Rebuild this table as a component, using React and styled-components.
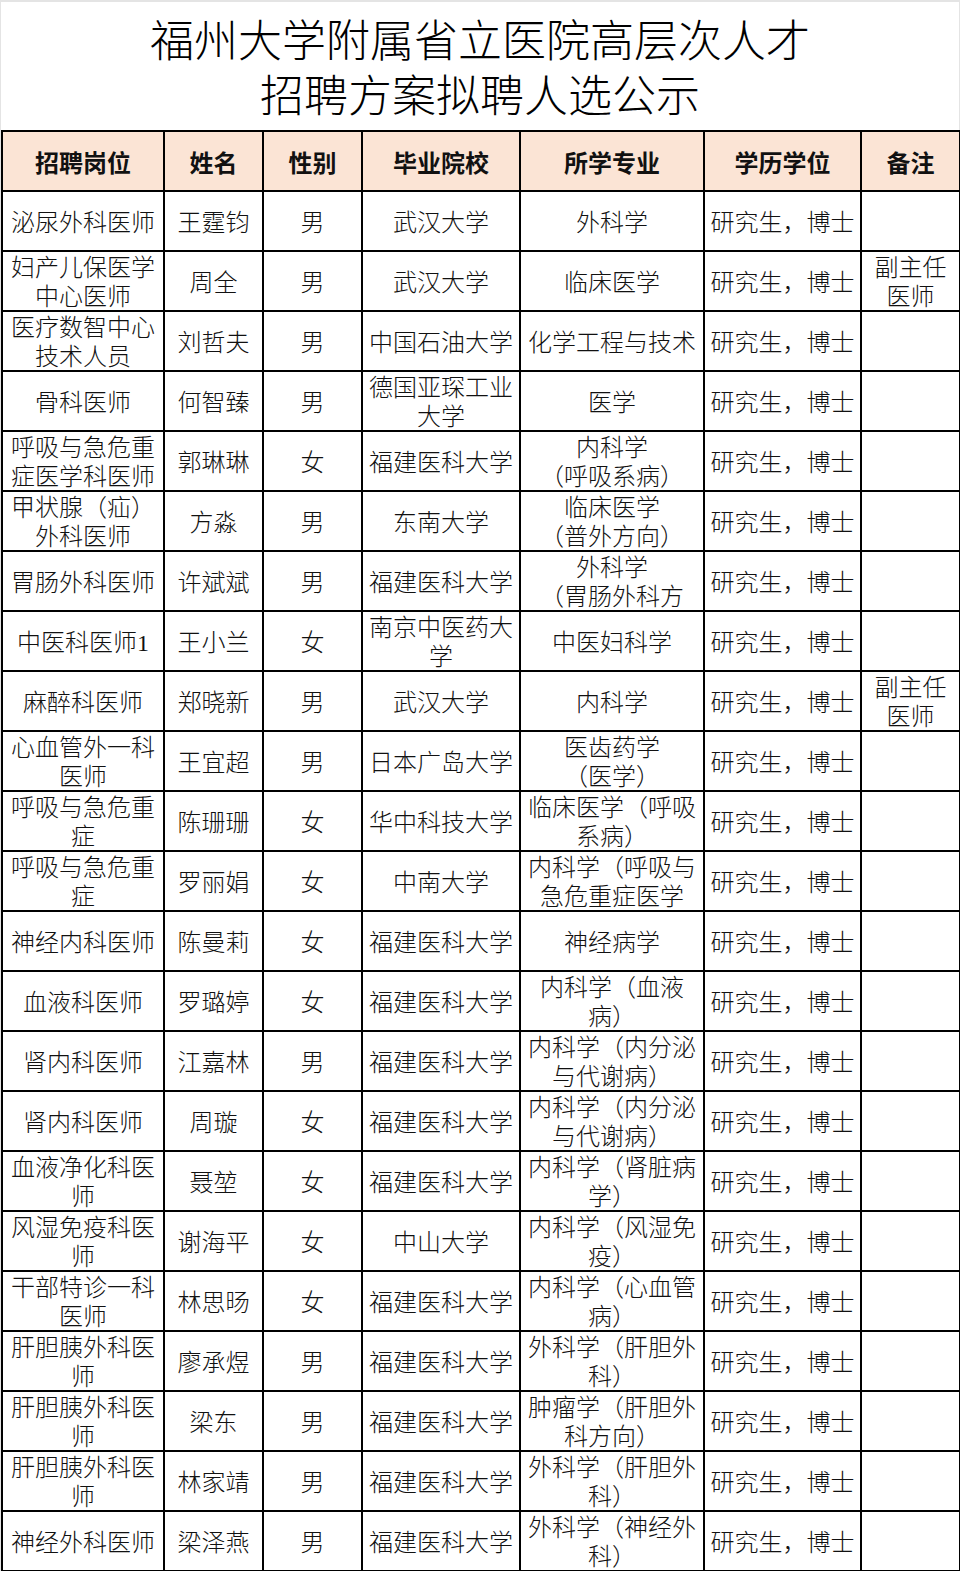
import React from 'react';
import styled, { createGlobalStyle } from 'styled-components';

const GlobalStyle = createGlobalStyle`
  html, body {
    margin: 0;
    padding: 0;
    background: #fff;
  }
  body {
    font-family: "Liberation Serif", "Noto Sans CJK SC", serif;
    color: #111;
    text-spacing-trim: space-all;
  }
`;

const Page = styled.div`
  width: 960px;
  box-sizing: border-box;
  border-top: 2px solid #e4e4e4;
  border-left: 1px solid #e4e4e4;
  border-right: 1px solid #e4e4e4;
`;

const Title = styled.h1`
  margin: 0;
  height: 128px;
  box-sizing: border-box;
  padding-top: 13px;
  text-align: center;
  font-size: 44px;
  line-height: 55px;
  font-weight: 300;
  color: #000;
`;

const Table = styled.table`
  width: 958px;
  table-layout: fixed;
  border-collapse: collapse;
`;

const HeadCell = styled.th`
  height: 58px;
  padding: 0;
  border: 2px solid #000;
  background: #fbe4d5;
  font-size: 24px;
  font-weight: 700;
  text-align: center;
  vertical-align: middle;
  color: #111;
`;

const Cell = styled.td`
  height: 58px;
  padding: 0;
  border: 2px solid #000;
  text-align: center;
  vertical-align: middle;
  font-size: 24px;
  line-height: 29px;
  font-weight: 300;
  white-space: nowrap;
  overflow: hidden;
`;

const Lines = styled.div`
  max-height: 58px;
  overflow: hidden;
  transform: translateY(2px);
`;

const columns = [
  { label: '招聘岗位', width: 162 },
  { label: '姓名', width: 99 },
  { label: '性别', width: 99 },
  { label: '毕业院校', width: 158 },
  { label: '所学专业', width: 184 },
  { label: '学历学位', width: 157 },
  { label: '备注', width: 99 },
];

const D = '研究生，博士';
const FJ = '福建医科大学';

// "/" marks where the original sheet breaks the line
const rows = [
  ['泌尿外科医师', '王霆钧', '男', '武汉大学', '外科学', D, ''],
  ['妇产儿保医学/中心医师', '周全', '男', '武汉大学', '临床医学', D, '副主任/医师'],
  ['医疗数智中心/技术人员', '刘哲夫', '男', '中国石油大学', '化学工程与技术', D, ''],
  ['骨科医师', '何智臻', '男', '德国亚琛工业/大学', '医学', D, ''],
  ['呼吸与急危重/症医学科医师', '郭琳琳', '女', FJ, '内科学/（呼吸系病）', D, ''],
  ['甲状腺（疝）/外科医师', '方淼', '男', '东南大学', '临床医学/（普外方向）', D, ''],
  ['胃肠外科医师', '许斌斌', '男', FJ, '外科学/（胃肠外科方', D, ''],
  ['中医科医师1', '王小兰', '女', '南京中医药大/学', '中医妇科学', D, ''],
  ['麻醉科医师', '郑晓新', '男', '武汉大学', '内科学', D, '副主任/医师'],
  ['心血管外一科/医师', '王宜超', '男', '日本广岛大学', '医齿药学/（医学）', D, ''],
  ['呼吸与急危重/症', '陈珊珊', '女', '华中科技大学', '临床医学（呼吸/系病）', D, ''],
  ['呼吸与急危重/症', '罗丽娟', '女', '中南大学', '内科学（呼吸与/急危重症医学', D, ''],
  ['神经内科医师', '陈曼莉', '女', FJ, '神经病学', D, ''],
  ['血液科医师', '罗璐婷', '女', FJ, '内科学（血液/病）', D, ''],
  ['肾内科医师', '江嘉林', '男', FJ, '内科学（内分泌/与代谢病）', D, ''],
  ['肾内科医师', '周璇', '女', FJ, '内科学（内分泌/与代谢病）', D, ''],
  ['血液净化科医/师', '聂堃', '女', FJ, '内科学（肾脏病/学）', D, ''],
  ['风湿免疫科医/师', '谢海平', '女', '中山大学', '内科学（风湿免/疫）', D, ''],
  ['干部特诊一科/医师', '林思旸', '女', FJ, '内科学（心血管/病）', D, ''],
  ['肝胆胰外科医/师', '廖承煜', '男', FJ, '外科学（肝胆外/科）', D, ''],
  ['肝胆胰外科医/师', '梁东', '男', FJ, '肿瘤学（肝胆外/科方向）', D, ''],
  ['肝胆胰外科医/师', '林家靖', '男', FJ, '外科学（肝胆外/科）', D, ''],
  ['神经外科医师', '梁泽燕', '男', FJ, '外科学（神经外/科）', D, ''],
];

function CellText({ text }) {
  const parts = text.split('/');
  return (
    <Lines>
      {parts.map((p, i) => (
        <div key={i}>{p}</div>
      ))}
    </Lines>
  );
}

export default function App() {
  return (
    <>
      <GlobalStyle />
      <Page>
        <Title>
          福州大学附属省立医院高层次人才
          <br />
          招聘方案拟聘人选公示
        </Title>
        <Table>
          <colgroup>
            {columns.map((c) => (
              <col key={c.label} style={{ width: c.width }} />
            ))}
          </colgroup>
          <thead>
            <tr>
              {columns.map((c) => (
                <HeadCell key={c.label}>{c.label}</HeadCell>
              ))}
            </tr>
          </thead>
          <tbody>
            {rows.map((row, r) => (
              <tr key={r}>
                {row.map((text, c) => (
                  <Cell key={c}>
                    <CellText text={text} />
                  </Cell>
                ))}
              </tr>
            ))}
          </tbody>
        </Table>
      </Page>
    </>
  );
}
